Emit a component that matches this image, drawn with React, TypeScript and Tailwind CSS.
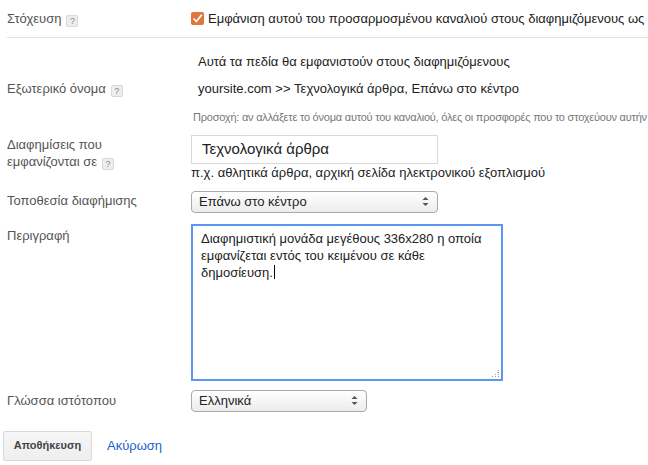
import React from "react";

const Help = () => (
  <span className="ml-[5px] inline-flex h-[12px] w-[12px] items-center justify-center rounded-[2px] border border-[#d8d8d8] bg-[#eeeeee] align-[-1px] text-[9px] leading-none text-[#888]">
    ?
  </span>
);

const Arrows = () => (
  <svg width="7" height="11" viewBox="0 0 7 11" className="shrink-0">
    <path d="M3.5 1 L6.5 4 L0.5 4 Z" fill="#555" />
    <path d="M3.5 10 L6.5 7 L0.5 7 Z" fill="#555" />
  </svg>
);

const Select = ({ value, w }: { value: string; w: string }) => (
  <div
    className={`${w} flex h-[22px] items-center justify-between rounded-[4px] border border-[#aaa] bg-gradient-to-b from-white to-[#ececec] pl-[7px] pr-[8px] text-[13px] text-[#222]`}
  >
    <span>{value}</span>
    <Arrows />
  </div>
);

export default function App() {
  return (
    <div
      className="h-[465px] w-[648px] overflow-hidden bg-white text-[13px] text-[#222]"
      style={{ fontFamily: '"Liberation Sans", Arial, sans-serif' }}
    >
      {/* Targeting row */}
      <div className="flex h-[37px] items-center pl-[7px]">
        <div className="w-[184px] shrink-0 text-[#555]">
          Στόχευση
          <Help />
        </div>
        <div className="flex items-center whitespace-nowrap">
          <span className="mr-[4px] flex h-[13px] w-[13px] items-center justify-center rounded-[2px] bg-[#e0763d]">
            <svg width="11" height="11" viewBox="0 0 11 11">
              <path d="M1.5 5.5 L4.3 8.5 L9.8 1.8" stroke="#fff" strokeWidth="1.8" fill="none" />
            </svg>
          </span>
          Εμφάνιση αυτού του προσαρμοσμένου καναλιού στους διαφημιζόμενους ως
        </div>
      </div>
      <div className="ml-[7px] h-px bg-[#e2e2e2]" />

      {/* Info text */}
      <div className="flex pl-[7px] pt-[14px]">
        <div className="w-[184px] shrink-0" />
        <div className="pl-[7px]">Αυτά τα πεδία θα εμφανιστούν στους διαφημιζόμενους</div>
      </div>

      {/* External name */}
      <div className="flex pl-[7px] pt-[7px]">
        <div className="w-[184px] shrink-0 text-[#555]">
          Εξωτερικό όνομα
          <Help />
        </div>
        <div className="pl-[7px] whitespace-nowrap">yoursite.com &gt;&gt; Τεχνολογικά άρθρα, Επάνω στο κέντρο</div>
      </div>
      <div className="flex pl-[7px] pt-[11px]">
        <div className="w-[184px] shrink-0" />
        <div className="pl-[2px] whitespace-nowrap text-[11px] tracking-[-0.22px] text-[#777]">
          Προσοχή: αν αλλάξετε το όνομα αυτού του καναλιού, όλες οι προσφορές που το στοχεύουν αυτήν
        </div>
      </div>

      {/* Ads shown on */}
      <div className="flex pl-[7px] pt-[9px]">
        <div className="w-[184px] shrink-0 pt-[1px] leading-[17px] text-[#555]">
          Διαφημίσεις που
          <br />
          εμφανίζονται σε
          <Help />
        </div>
        <div>
          <div className="flex h-[29px] w-[247px] items-center border border-[#d9d9d9] pl-[10px] text-[15px] text-[#222]">
            Τεχνολογικά άρθρα
          </div>
          <div className="leading-[17px] whitespace-nowrap">π.χ. αθλητικά άρθρα, αρχική σελίδα ηλεκτρονικού εξοπλισμού</div>
        </div>
      </div>

      {/* Location */}
      <div className="flex pl-[7px] pt-[10px]">
        <div className="w-[184px] shrink-0 text-[#555]">Τοποθεσία διαφήμισης</div>
        <Select value="Επάνω στο κέντρο" w="w-[247px]" />
      </div>

      {/* Description */}
      <div className="flex pl-[7px] pt-[11px]">
        <div className="w-[184px] shrink-0 pt-[2px] text-[#555]">Περιγραφή</div>
        <div className="relative h-[157px] w-[312px] border-2 border-[#5b97f0] pl-[8px] pr-[6px] pt-[4px] leading-[17px] text-[#222]">
          Διαφημιστική μονάδα μεγέθους 336x280 η οποία εμφανίζεται εντός του κειμένου σε κάθε δημοσίευση.
          <span className="ml-[1px] inline-block h-[14px] w-px bg-black align-[-2px]" />
          <svg width="9" height="9" viewBox="0 0 9 9" className="absolute bottom-[1px] right-[1px]">
            <rect x="7" y="1" width="1" height="1" fill="#999" />
            <rect x="6" y="3" width="1" height="1" fill="#999" />
            <rect x="7" y="3" width="1" height="1" fill="#999" />
            <rect x="4" y="5" width="1" height="1" fill="#999" />
            <rect x="7" y="5" width="1" height="1" fill="#999" />
            <rect x="1" y="7" width="1" height="1" fill="#999" />
            <rect x="4" y="7" width="1" height="1" fill="#999" />
            <rect x="7" y="7" width="1" height="1" fill="#999" />
          </svg>
        </div>
      </div>

      {/* Language */}
      <div className="flex items-start pl-[7px] pt-[9px]">
        <div className="w-[184px] shrink-0 pt-[1px] text-[#555]">Γλώσσα ιστότοπου</div>
        <Select value="Ελληνικά" w="w-[176px]" />
      </div>

      {/* Buttons */}
      <div className="flex items-center pl-[3px] pt-[19px]">
        <div className="flex h-[30px] w-[89px] items-center justify-center rounded-[2px] border border-[#d9d9d9] bg-gradient-to-b from-[#f6f6f6] to-[#eeeeee] text-[11px] font-bold text-[#444]">
          Αποθήκευση
        </div>
        <a className="ml-[15px] text-[13px] text-[#1a5fcc]">Ακύρωση</a>
      </div>
    </div>
  );
}
